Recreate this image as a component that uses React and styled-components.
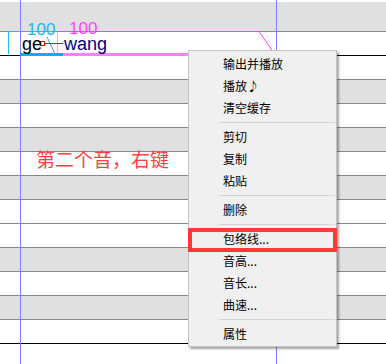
import React from "react";
import styled, { createGlobalStyle } from "styled-components";

const Global = createGlobalStyle`
  html, body { margin: 0; padding: 0; background: #fff; overflow: hidden; }
  body { font-family: "Liberation Sans", Arial, sans-serif; }
`;

const Canvas = styled.div`
  position: relative;
  width: 386px;
  height: 364px;
  overflow: hidden;
  display: flex;
  flex-direction: column;
  background: #fff;
`;

const TopGap = styled.div`
  height: 2px;
  flex-shrink: 0;
  background: #fff;
`;

const Row = styled.div`
  flex-shrink: 0;
  height: ${(p) => p.$h || 23}px;
  background: ${(p) => (p.$black ? "#e0e0e0" : "#ffffff")};
  border-bottom: 1px solid ${(p) => (p.$octave ? "#000000" : "#888888")};
`;

const BeatLine = styled.div`
  position: absolute;
  top: 0;
  bottom: 0;
  left: ${(p) => p.$x}px;
  width: 1px;
  background: #8080ff;
`;

const NoteLayer = styled.svg`
  position: absolute;
  left: 0;
  top: 0;
  width: 386px;
  height: 364px;
  pointer-events: none;
`;

const Label = styled.div`
  position: absolute;
  left: ${(p) => p.$x}px;
  top: ${(p) => p.$y}px;
  font-family: "Liberation Sans", Arial, sans-serif;
  font-size: ${(p) => p.$size}px;
  line-height: ${(p) => p.$lh}px;
  color: ${(p) => p.$color};
  white-space: nowrap;
`;

const Annotation = styled.div`
  position: absolute;
  left: 36px;
  top: 148px;
  font-family: "Noto Sans CJK SC", "Liberation Sans", sans-serif;
  font-size: 19px;
  line-height: 22px;
  color: #ff4040;
  white-space: nowrap;
`;

const Menu = styled.div`
  position: absolute;
  left: 188px;
  top: 50px;
  width: 149px;
  box-sizing: border-box;
  background: #f0f0f0;
  border: 1px solid #c4c4c4;
  box-shadow: 2px 2px 2px rgba(0, 0, 0, 0.35);
  padding: 2px 0 1px 0;
  display: flex;
  flex-direction: column;
  font-family: "Noto Sans CJK SC", "Liberation Sans", sans-serif;
`;

const Item = styled.div`
  height: 22px;
  line-height: 22px;
  padding-left: 34px;
  font-size: 12px;
  color: #000;
  white-space: nowrap;
`;

const Separator = styled.div`
  height: 1px;
  margin: 3px 1px 3px 30px;
  background: #d5d5d5;
`;

const Highlight = styled.div`
  position: absolute;
  left: -1px;
  top: 177px;
  width: 149px;
  height: 24px;
  box-sizing: border-box;
  border: 4px solid #ff3838;
`;

const rows = [
  { black: false, octave: true },
  { black: false },
  { black: true },
  { black: false },
  { black: true },
  { black: false },
  { black: true },
  { black: false },
  { black: false },
  { black: true },
  { black: false },
  { black: true },
  { black: false, octave: true },
  { black: false },
];

const menu = [
  "输出并播放",
  "播放♪",
  "清空缓存",
  "-",
  "剪切",
  "复制",
  "粘贴",
  "-",
  "删除",
  "-",
  "包络线...",
  "音高...",
  "音长...",
  "曲速...",
  "-",
  "属性",
];

export default function App() {
  return (
    <>
      <Global />
      <Canvas>
        <TopGap />
        <Row $black $h={29} />
        {rows.map((r, i) => (
          <Row key={i} $black={r.black} $octave={r.octave} />
        ))}

        <BeatLine $x={20} />
        <BeatLine $x={276} />

        <NoteLayer viewBox="0 0 386 364">
          <path d="M8.5 54 L8.5 31.5 L57 31.5" stroke="#22b8f0" strokeWidth="1" fill="none" />
          <path d="M47 37 L55 54" stroke="#22b8f0" strokeWidth="1" fill="none" />
          <path d="M57.5 31.5 L259 31.5 L276 56" stroke="#ff40ff" strokeWidth="1" fill="none" />
          <path d="M57.5 32 L57.5 53" stroke="#ff9cff" strokeWidth="1" fill="none" />
          <rect x="20" y="53" width="43" height="3" fill="#00b0f0" />
          <rect x="63" y="53" width="213" height="3" fill="#ff80ff" />
          <rect x="40.5" y="41.5" width="4" height="4" stroke="#ff0000" strokeWidth="1" fill="none" />
          <path d="M44.5 43.5 L63 43.5" stroke="#ff0000" strokeWidth="1" fill="none" />
        </NoteLayer>

        <Label $x={27} $y={24} $size={17} $lh={12} $color="#20b8f0">100</Label>
        <Label $x={69} $y={23} $size={17} $lh={12} $color="#ff44ff">100</Label>
        <Label $x={22} $y={37} $size={18} $lh={14} $color="#000000">ge</Label>
        <Label $x={64} $y={37} $size={18} $lh={14} $color="#000080">wang</Label>

        <Annotation>第二个音，右键</Annotation>

        <Menu>
          {menu.map((m, i) =>
            m === "-" ? <Separator key={i} /> : <Item key={i}>{m}</Item>
          )}
          <Highlight />
        </Menu>
      </Canvas>
    </>
  );
}
